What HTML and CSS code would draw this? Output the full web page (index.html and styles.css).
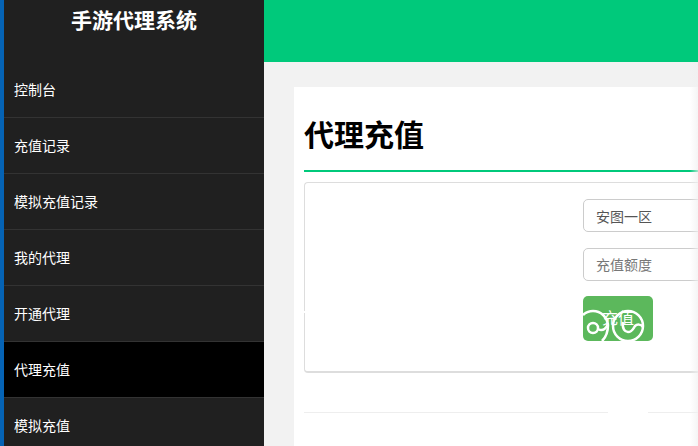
FILE: index.html
```html
<!DOCTYPE html>
<html lang="zh">
<head>
<meta charset="UTF-8" />
<title>手游代理系统</title>
<link rel="stylesheet" href="styles.css">
</head>
<body>
<div class="layout">
  <div class="sidebar">
    <div class="logo">手游代理系统</div>
    <ul class="menu">
      <li>控制台</li>
      <li>充值记录</li>
      <li>模拟充值记录</li>
      <li>我的代理</li>
      <li>开通代理</li>
      <li class="active">代理充值</li>
      <li>模拟充值</li>
    </ul>
  </div>
  <div class="main">
    <div class="topbar"></div>
    <div class="content">
      <div class="panel">
        <h1 class="title">代理充值</h1>
        <div class="form-box">
          <div class="form">
            <input class="field" value="安图一区" />
            <input class="field" placeholder="充值额度" />
            <button class="btn">充值
              <svg class="swirl" width="70" height="45" viewBox="0 0 70 45" fill="none" stroke="#fff" stroke-width="2.5">
                <path d="M0 19 C3 16 6 15 10 15 C18 15 24 21 25 29 C25 36 23 41 19 45"/>
                <circle cx="10" cy="32" r="5"/>
                <path d="M15 33 C20 36 24 32 25 27"/>
                <circle cx="45" cy="30" r="15"/>
                <path d="M40 26 C39 33 42 36 45 36 C49 36 50 33 52 30 C54 28 58 28 60 31"/>
              </svg>
            </button>
          </div>
        </div>
        <div class="divider"><span class="gap"></span></div>
      </div>
    </div>
  </div>
</div>
<div class="fade"></div>
</body>
</html>
```

FILE: styles.css
```css
html, body { margin:0; height:100%; overflow:hidden; }
body { background:#f2f2f2; font-family:"Liberation Sans", "Noto Sans CJK SC", sans-serif; }
.layout { display:flex; width:698px; height:446px; overflow:hidden; }

.sidebar { width:260px; flex:none; background:#202020; border-left:4px solid #0563b5; color:#fff; }
.logo { height:62px; padding-top:6px; box-sizing:border-box; text-align:center; font-size:21px; line-height:30px; font-weight:bold; }
.menu { list-style:none; margin:0; padding:0; }
.menu li { height:56px; box-sizing:border-box; padding-left:10px; line-height:57px; font-size:14px; border-bottom:1px solid #333; }
.menu li.active { background:#000; }

.main { flex:1; min-width:0; }
.topbar { height:62px; background:#00c97b; }
.content { padding:25px 0 0 30px; }
.panel { background:#fff; height:400px; padding:0 0 0 10px; }
.title { margin:0; padding-top:30px; height:53px; line-height:38px; font-size:30px; font-weight:bold; color:#000; border-bottom:2px solid #00c97b; }

.form-box { position:relative; margin:10px -10px 0 0; height:172px; padding:16px 0 0 278px; border:1px solid #ddd; border-bottom:2px solid #ddd; border-right:none; border-radius:4px 0 0 4px; }
.form-box::before { content:""; position:absolute; left:-1px; top:128px; width:1px; height:2px; background:#fff; }
.form { display:flex; flex-direction:column; align-items:flex-start; }
.field { display:block; width:150px; height:33px; box-sizing:border-box; margin-bottom:16px; padding:0 12px; font:14px "Liberation Sans", "Noto Sans CJK SC", sans-serif; color:#555; background:#fff; border:1px solid #ccc; border-radius:5px; outline:none; }
.field::placeholder { color:#777; opacity:1; }
.btn { position:relative; width:70px; height:45px; padding:0 0 4px; margin-top:-1px; background:#5cb85c; border:none; border-radius:5px; color:#fff; font:16px "Liberation Sans", "Noto Sans CJK SC", sans-serif; overflow:hidden; }
.swirl { position:absolute; left:0; top:0; }

.divider { position:relative; margin-top:39px; height:1px; background:#eee; }
.gap { position:absolute; left:304px; top:0; width:40px; height:1px; background:#fff; }

.fade { position:absolute; top:62px; right:0; width:8px; height:384px; background:linear-gradient(to right, rgba(240,240,240,0), rgba(240,240,240,.7)); }
```
